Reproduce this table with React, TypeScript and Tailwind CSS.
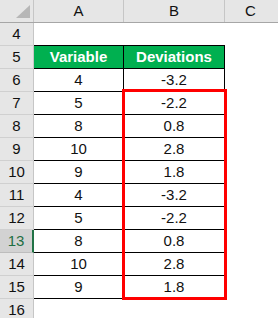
import React from "react";

const rows: { n: number; a: string; b: string; head?: boolean; empty?: boolean }[] = [
  { n: 4, a: "", b: "", empty: true },
  { n: 5, a: "Variable", b: "Deviations", head: true },
  { n: 6, a: "4", b: "-3.2" },
  { n: 7, a: "5", b: "-2.2" },
  { n: 8, a: "8", b: "0.8" },
  { n: 9, a: "10", b: "2.8" },
  { n: 10, a: "9", b: "1.8" },
  { n: 11, a: "4", b: "-3.2" },
  { n: 12, a: "5", b: "-2.2" },
  { n: 13, a: "8", b: "0.8" },
  { n: 14, a: "10", b: "2.8" },
  { n: 15, a: "9", b: "1.8" },
  { n: 16, a: "", b: "", empty: true },
];

export default function App() {
  return (
    <div
      className="relative w-[278px] h-[318px] overflow-hidden bg-white text-[15px] text-[#111]"
      style={{ fontFamily: '"Liberation Sans", Arial, sans-serif' }}
    >
      {/* column header */}
      <div className="flex h-[23px] bg-[#e6e6e6] border-b border-[#a6a6a6]">
        <div className="relative w-[34px] shrink-0 border-r border-[#c6c6c6]">
          <svg className="absolute left-0 top-0" width="33" height="22" viewBox="0 0 33 22">
            <polygon points="30,5 30,18 16,18" fill="#b7b7b7" />
          </svg>
        </div>
        <div className="w-[90px] shrink-0 border-r border-[#c6c6c6] flex items-center justify-center">A</div>
        <div className="w-[101px] shrink-0 border-r border-[#c6c6c6] flex items-center justify-center">B</div>
        <div className="flex-1 flex items-center justify-center pr-[2px]">C</div>
      </div>
      {rows.map((r) => {
        const sel = r.n === 13;
        const cellBorder = r.empty ? (r.n === 4 ? "border-b border-black" : "") : "border-b border-r border-black";
        return (
          <div key={r.n} className="flex h-[23px]">
            <div
              className={
                "w-[34px] shrink-0 flex items-center justify-center border-b " +
                (sel
                  ? "bg-[#d2d2d2] text-[#1e6e42] border-b-[#bdbdbd] border-r-2 border-r-[#217346]"
                  : "bg-[#e6e6e6] border-b-[#d0d0d0] border-r border-r-[#c6c6c6]")
              }
            >
              {r.n}
            </div>
            <div
              className={
                "w-[90px] shrink-0 flex items-center justify-center " +
                (r.n === 4 ? "border-b border-black" : r.empty ? "" : "border-b border-r border-black") +
                (r.head ? " bg-[#00b050] text-white font-bold" : "")
              }
            >
              {r.a}
            </div>
            <div
              className={
                "w-[101px] shrink-0 flex items-center justify-center " +
                cellBorder +
                (r.head ? " bg-[#00b050] text-white font-bold" : "")
              }
            >
              {r.b}
            </div>
            <div className="flex-1" />
          </div>
        );
      })}
      {/* red highlight box */}
      <div className="absolute left-[122px] top-[89px] w-[105px] h-[211px] border-[3px] border-[#ff0000]" />
    </div>
  );
}
